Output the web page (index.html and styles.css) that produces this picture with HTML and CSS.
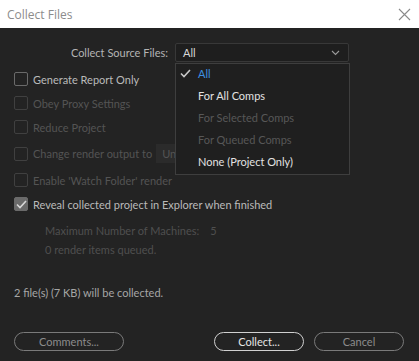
FILE: index.html
```html
<!DOCTYPE html>
<html lang="en">
<head>
    <meta charset="UTF-8">
    <meta name="viewport" content="width=device-width, initial-scale=1.0">
    <title>Collect Files</title>
    <link rel="stylesheet" href="styles.css">
</head>
<body>

    <div class="titlebar">
        <div class="title">Collect Files</div>
        <svg class="close" width="13" height="13" viewBox="0 0 13 13">
            <path d="M1 1 L12 12 M12 1 L1 12" stroke="#8a8a8a" stroke-width="1.1" fill="none"/>
        </svg>
    </div>

    <div class="dialog">
        <div class="source-row">
            <span class="label">Collect Source Files:</span>
            <div class="select">
                <span>All</span>
                <svg width="9" height="6" viewBox="0 0 9 6">
                    <path d="M1 1 L4.5 4.5 L8 1" stroke="#9a9a9a" stroke-width="1.1" fill="none"/>
                </svg>
                <!-- open dropdown list -->
                <div class="menu">
                    <div class="menu-item selected">
                        <svg class="tick" width="11" height="9" viewBox="0 0 11 9">
                            <path d="M1 4.5 L4 7.5 L10 1" stroke="#c8c8c8" stroke-width="1.6" fill="none"/>
                        </svg>
                        All
                    </div>
                    <div class="menu-item">For All Comps</div>
                    <div class="menu-item disabled">For Selected Comps</div>
                    <div class="menu-item disabled">For Queued Comps</div>
                    <div class="menu-item">None (Project Only)</div>
                </div>
            </div>
        </div>

        <div class="options">
            <label class="option">
                <span class="box"></span>
                <span>Generate Report Only</span>
            </label>
            <label class="option disabled">
                <span class="box"></span>
                <span>Obey Proxy Settings</span>
            </label>
            <label class="option disabled">
                <span class="box"></span>
                <span>Reduce Project</span>
            </label>
            <label class="option disabled tall">
                <span class="box"></span>
                <span>Change render output to</span>
                <span class="mini-select">Un</span>
            </label>
            <label class="option disabled">
                <span class="box"></span>
                <span>Enable 'Watch Folder' render</span>
            </label>
            <label class="option">
                <span class="box checked">
                    <svg width="11" height="9" viewBox="0 0 11 9">
                        <path d="M1 4.5 L4 7.5 L10 1" stroke="#d8d8d8" stroke-width="1.6" fill="none"/>
                    </svg>
                </span>
                <span>Reveal collected project in Explorer when finished</span>
            </label>
        </div>

        <div class="machines">
            <div class="machines-row">
                <span>Maximum Number of Machines:</span>
                <span class="count">5</span>
            </div>
            <div>0 render items queued.</div>
        </div>

        <div class="summary">2 file(s) (7 KB) will be collected.</div>

        <div class="buttons">
            <button class="btn">Comments...</button>
            <div class="right">
                <button class="btn primary">Collect...</button>
                <button class="btn">Cancel</button>
            </div>
        </div>
    </div>

</body>
</html>
```

FILE: styles.css
```css
/* Global Styles */
body {
    font-family: Lato, "Noto Sans", sans-serif;
    font-size: 11px;
    margin: 0;
    padding: 0;
    width: 419px;
    height: 361px;
    background-color: #232323;
    overflow: hidden;
    display: flex;
    flex-direction: column;
}

/* Title Bar */
.titlebar {
    height: 28px;
    background-color: #ffffff;
    display: flex;
    align-items: center;
    justify-content: space-between;
    padding: 0 8px 0 7px;
}

.title {
    font-family: "Open Sans", sans-serif;
    font-size: 12px;
    color: #8c8c8c;
}

/* Dialog Body */
.dialog {
    flex-grow: 1;
    display: flex;
    flex-direction: column;
    padding: 0 15px 10px 14px;
    color: #bababa;
}

.source-row {
    display: flex;
    align-items: center;
    justify-content: flex-end;
    margin-top: 15px;
    padding-right: 55px;
}

.source-row .label {
    margin-right: 7px;
    color: #b4b4b4;
}

.select {
    width: 174px;
    height: 19px;
    box-sizing: border-box;
    border: 1px solid #383838;
    border-radius: 2px;
    background-color: #1e1e1e;
    display: flex;
    align-items: center;
    justify-content: space-between;
    padding: 0 8px 0 7px;
    color: #d6d6d6;
    position: relative;
}

/* Dropdown List */
.menu {
    position: absolute;
    top: 19px;
    left: -1px;
    width: 175px;
    box-sizing: border-box;
    background-color: #1f1f1f;
    border: 1px solid #3e3e3e;
    z-index: 2;
}

.menu-item {
    height: 22px;
    box-sizing: border-box;
    display: flex;
    align-items: center;
    padding: 0 0 3px 22px;
    color: #e2e2e2;
    position: relative;
}

.menu-item.selected { color: #3d8fe0; }
.menu-item.disabled { color: #575757; }

.tick {
    position: absolute;
    left: 4px;
    top: 5px;
}

/* Checkbox Options */
.options {
    display: flex;
    flex-direction: column;
    margin-top: 5px;
}

.option {
    display: flex;
    align-items: center;
    height: 24px;
}

.option.tall { height: 29px; }

.box {
    width: 12px;
    height: 12px;
    border: 1px solid #6a6a6a;
    border-radius: 2px;
    margin-right: 5px;
    display: flex;
    align-items: center;
    justify-content: center;
}

.box.checked {
    background-color: #6a6a6a;
    border-color: #6a6a6a;
}

.option.disabled { color: #545454; }
.option.disabled .box { border-color: #404040; }

.mini-select {
    margin-left: 4px;
    width: 40px;
    height: 19px;
    background-color: #2b2b2b;
    display: flex;
    align-items: center;
    padding-left: 6px;
}

/* Render Machines */
.machines {
    margin: 5px 0 0 31px;
    color: #4f4f4f;
    line-height: 19px;
}

.machines-row .count { margin-left: 8px; }

.summary {
    margin-top: 27px;
    color: #a6a6a6;
}

/* Buttons */
.buttons {
    margin-top: auto;
    display: flex;
    justify-content: space-between;
}

.right {
    display: flex;
    gap: 10px;
}

.btn {
    font-family: Lato, "Noto Sans", sans-serif;
    font-size: 11px;
    height: 19px;
    width: 110px;
    border-radius: 10px;
    border: 1px solid #7a7a7a;
    background: transparent;
    color: #8c8c8c;
    padding: 0;
}

.right .btn { width: 90px; }

.btn.primary {
    border-color: #d0d0d0;
    color: #e6e6e6;
}
```
